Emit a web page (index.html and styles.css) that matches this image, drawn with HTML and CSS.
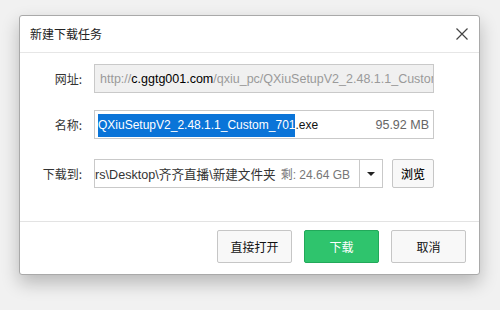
FILE: index.html
```html
<!DOCTYPE html>
<html lang="zh-CN">
<head>
    <meta charset="UTF-8">
    <title>新建下载任务</title>
    <link rel="stylesheet" href="styles.css">
</head>
<body>
    <div class="window">
        <div class="titlebar">
            <span class="title">新建下载任务</span>
            <svg class="close" width="12" height="12" viewBox="0 0 12 12">
                <path d="M0.5 0.5 L11.5 11.5 M11.5 0.5 L0.5 11.5" stroke="#444" stroke-width="1.2" fill="none"/>
            </svg>
        </div>

        <div class="form">
            <div class="row">
                <label class="label">网址:</label>
                <div class="field field-url">
                    <span class="dim">http://</span><span class="host">c.ggtg001.com</span><span class="dim">/qxiu_pc/QXiuSetupV2_2.48.1.1_Custom_701.exe</span>
                </div>
            </div>
            <div class="row row-name">
                <label class="label">名称:</label>
                <div class="field field-name">
                    <span class="name"><span class="selected">QXiuSetupV2_2.48.1.1_Custom_701</span>.exe</span>
                    <span class="size">95.92 MB</span>
                </div>
            </div>
            <div class="row row-path">
                <label class="label">下载到:</label>
                <div class="combo">
                    <div class="combo-text">
                        <span class="path">rs\Desktop\齐齐直播\新建文件夹</span>
                        <span class="free">剩: 24.64 GB</span>
                    </div>
                    <div class="combo-arrow"></div>
                </div>
                <button class="btn btn-browse">浏览</button>
            </div>
        </div>

        <div class="footer">
            <button class="btn">直接打开</button>
            <button class="btn btn-primary">下载</button>
            <button class="btn">取消</button>
        </div>
    </div>
</body>
</html>
```

FILE: styles.css
```css
body {
    margin: 0;
    padding: 15px 0 0 19px;
    background: #f1f1f1;
    font-family: "Noto Sans CJK SC", "Liberation Sans", sans-serif;
    height: 310px;
    box-sizing: border-box;
    overflow: hidden;
}

.window {
    width: 461px;
    height: 260px;
    box-sizing: border-box;
    background: #fff;
    border: 1px solid #a9a9a9;
    border-radius: 3px;
    box-shadow: 0 8px 18px rgba(0, 0, 0, 0.24);
    display: flex;
    flex-direction: column;
}

.titlebar {
    height: 36px;
    flex: none;
    display: flex;
    align-items: center;
    justify-content: space-between;
    padding: 0 11px 0 10px;
    border-bottom: 1px solid #e6e6e6;
}

.title {
    font-size: 12px;
    color: #222;
    margin-top: -1px;
}

.close {
    display: block;
}

.form {
    flex: 1;
    padding-top: 11px;
}

.row {
    display: flex;
    align-items: center;
    height: 29px;
}

.row-name {
    margin-top: 17px;
}

.row-path {
    margin-top: 20px;
}

.label {
    width: 62px;
    margin-right: 12px;
    text-align: right;
    font-size: 12px;
    color: #333;
    flex: none;
}

.field {
    width: 340px;
    height: 29px;
    box-sizing: border-box;
    border: 1px solid #c9c9c9;
    display: flex;
    align-items: center;
    overflow: hidden;
    white-space: nowrap;
    font-family: "Liberation Sans", sans-serif;
    font-size: 12.5px;
}

.field-url {
    background: #f0f0f0;
    padding-left: 5px;
}

.dim {
    color: #9a9a9a;
}

.host {
    color: #000;
}

.field-name {
    justify-content: space-between;
    padding: 0 4px 0 3px;
    font-size: 12px;
}

.name {
    color: #111;
}

.selected {
    background: #0a74d8;
    color: #fff;
    padding: 4px 0 5px;
}

.size {
    color: #666;
    font-size: 12.5px;
}

.combo {
    width: 289px;
    height: 29px;
    box-sizing: border-box;
    border: 1px solid #c9c9c9;
    display: flex;
    flex: none;
}

.combo-text {
    flex: 1;
    display: flex;
    align-items: center;
    justify-content: flex-end;
    overflow: hidden;
    white-space: nowrap;
    padding-right: 9px;
    font-family: "Liberation Sans", "Noto Sans CJK SC", sans-serif;
    font-size: 12px;
}

.path {
    color: #333;
    font-size: 12.6px;
}

.free {
    color: #777;
    margin-left: 5px;
}

.combo-arrow {
    width: 22px;
    border-left: 1px solid #c9c9c9;
    display: flex;
    align-items: center;
    justify-content: center;
}

.combo-arrow::after {
    content: '';
    border-left: 4px solid transparent;
    border-right: 4px solid transparent;
    border-top: 4px solid #222;
}

.btn {
    width: 75px;
    height: 33px;
    box-sizing: border-box;
    border: 1px solid #c6c6c6;
    border-radius: 2px;
    background: #f8f8f8;
    font-family: "Noto Sans CJK SC", sans-serif;
    font-size: 12px;
    color: #111;
    padding: 0;
}

.btn-browse {
    width: 42px;
    height: 29px;
    margin-left: 9px;
    font-weight: 500;
}

.footer {
    height: 53px;
    flex: none;
    box-sizing: border-box;
    border-top: 1px solid #e3e3e3;
    display: flex;
    justify-content: flex-end;
    align-items: flex-start;
    gap: 12px;
    padding: 8px 13px 0 0;
}

.btn-primary {
    background: #2fc46d;
    border-color: #22a95a;
    color: #fff;
}
```
